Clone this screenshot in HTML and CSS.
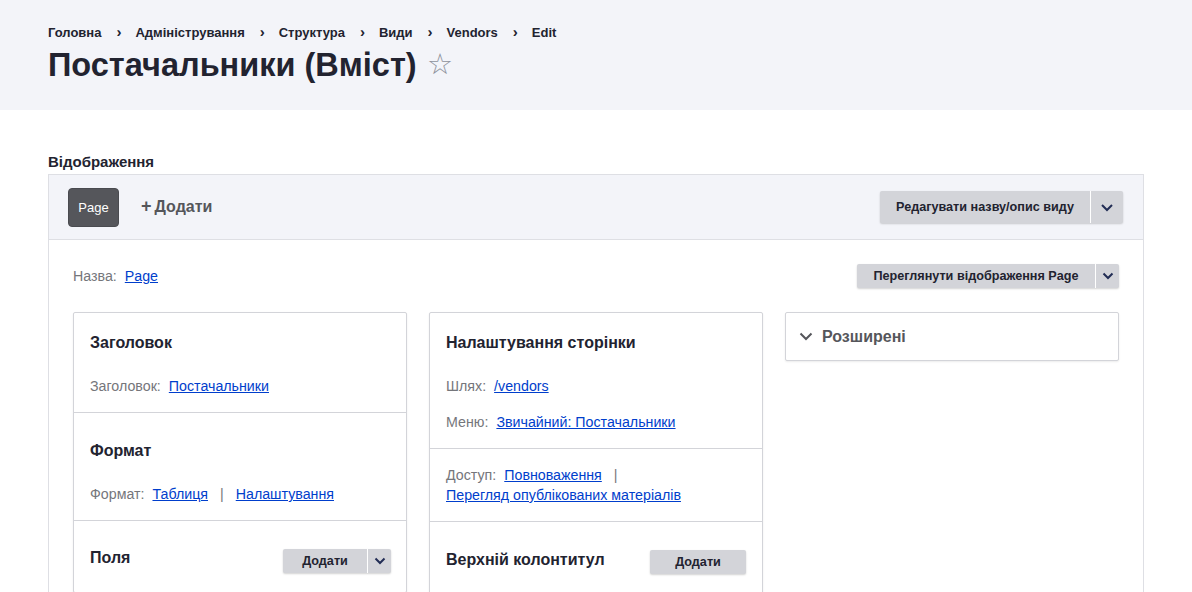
FILE: index.html
```html
<!DOCTYPE html>
<html lang="uk">
<head>
<meta charset="utf-8">
<title>Постачальники (Вміст)</title>
<link rel="stylesheet" href="styles.css">
</head>
<body>
<header class="page-head">
  <nav class="crumbs">
    <a href="#">Головна</a><span class="sep">›</span>
    <a href="#">Адміністрування</a><span class="sep">›</span>
    <a href="#">Структура</a><span class="sep">›</span>
    <a href="#">Види</a><span class="sep">›</span>
    <a href="#">Vendors</a><span class="sep">›</span>
    <a href="#">Edit</a>
  </nav>
  <div class="title-row">
    <h1 class="title">Постачальники (Вміст)</h1>
    <span class="star">☆</span>
  </div>
</header>

<main class="main">
  <h2 class="disp-label">Відображення</h2>
  <section class="display-box">
    <div class="tabbar">
      <div class="tabs">
        <a class="tab-active" href="#">Page</a>
        <a class="tab-add" href="#"><span class="plus">+</span>Додати</a>
      </div>
      <div class="split split-lg">
        <span class="split-main">Редагувати назву/опис виду</span>
        <span class="split-toggle"><svg width="14" height="9" viewBox="0 0 14 9"><path d="M2 2l5 5 5-5" fill="none" stroke="#222d55" stroke-width="2"/></svg></span>
      </div>
    </div>

    <div class="content">
      <div class="name-row">
        <div class="row"><span class="lbl">Назва:</span><a href="#">Page</a></div>
        <div class="split split-sm split-view">
          <span class="split-main">Переглянути відображення Page</span>
          <span class="split-toggle"><svg width="12" height="8" viewBox="0 0 12 8"><path d="M1.5 1.5l4.5 4.5 4.5-4.5" fill="none" stroke="#222d55" stroke-width="2"/></svg></span>
        </div>
      </div>

      <div class="columns">
        <div class="card">
          <div class="sec sec-first">
            <h3 class="sec-title">Заголовок</h3>
            <div class="row"><span class="lbl">Заголовок:</span><a href="#">Постачальники</a></div>
          </div>
          <div class="sec">
            <h3 class="sec-title">Формат</h3>
            <div class="row"><span class="lbl">Формат:</span><a href="#">Таблиця</a><span class="pipe">|</span><a href="#">Налаштування</a></div>
          </div>
          <div class="sec sec-head">
            <h3 class="sec-title">Поля</h3>
            <div class="split split-sm split-add">
              <span class="split-main">Додати</span>
              <span class="split-toggle"><svg width="12" height="8" viewBox="0 0 12 8"><path d="M1.5 1.5l4.5 4.5 4.5-4.5" fill="none" stroke="#222d55" stroke-width="2"/></svg></span>
            </div>
          </div>
        </div>

        <div class="card">
          <div class="sec sec-first">
            <h3 class="sec-title">Налаштування сторінки</h3>
            <div class="row"><span class="lbl">Шлях:</span><a href="#">/vendors</a></div>
            <div class="row row-gap"><span class="lbl">Меню:</span><a href="#">Звичайний: Постачальники</a></div>
          </div>
          <div class="sec sec-plain">
            <div class="row"><span class="lbl">Доступ:</span><a href="#">Повноваження</a><span class="pipe">|</span><br><a href="#">Перегляд опублікованих матеріалів</a></div>
          </div>
          <div class="sec sec-head sec-head2">
            <h3 class="sec-title">Верхній колонтитул</h3>
            <span class="btn-plain">Додати</span>
          </div>
        </div>

        <div class="col3">
          <div class="card adv">
            <svg class="adv-chev" width="14" height="9" viewBox="0 0 14 9"><path d="M1.5 1.5l5.5 5.5 5.5-5.5" fill="none" stroke="#55565b" stroke-width="2"/></svg>
            <span class="adv-title">Розширені</span>
          </div>
        </div>
      </div>
    </div>
  </section>
</main>
</body>
</html>
```

FILE: styles.css
```css
* { box-sizing: border-box; }
html, body { margin: 0; padding: 0; }
body {
  font-family: "Liberation Sans", Arial, sans-serif;
  color: #222330;
  background: #ffffff;
  width: 1192px;
  height: 592px;
  overflow: hidden;
}
a { color: #003ecc; }

.page-head {
  background: #f3f4f9;
  height: 110px;
  padding: 25px 48px 0;
}
.crumbs {
  display: flex;
  align-items: center;
  font-size: 13px;
  font-weight: bold;
  line-height: 16px;
  height: 16px;
}
.crumbs a { color: #222330; text-decoration: none; }
.crumbs .sep {
  font-size: 15px;
  font-weight: bold;
  margin: 0 14px 0 15px;
  position: relative;
  top: -1px;
}
.title-row {
  display: flex;
  align-items: center;
  margin-top: 4px;
  height: 40px;
}
.title {
  margin: 0;
  font-size: 32.5px;
  line-height: 40px;
  font-weight: bold;
}
.star {
  margin-left: 10px;
  font-size: 29px;
  color: #8e929c;
  line-height: 40px;
  position: relative;
  top: -1px;
}

.main { padding: 0 48px; }
.disp-label {
  margin: 43px 0 0;
  font-size: 15px;
  line-height: 18px;
  font-weight: bold;
  height: 21px;
}
.display-box {
  border: 1px solid #dedfe4;
  border-bottom: 0;
  height: 500px;
}
.tabbar {
  background: #f3f4f9;
  height: 65px;
  border-bottom: 1px solid #dedfe4;
  display: flex;
  align-items: center;
  justify-content: space-between;
  padding: 0 20px 0 19px;
}
.tabs { display: flex; align-items: center; }
.tab-active {
  display: flex;
  align-items: center;
  justify-content: center;
  width: 51px;
  height: 39px;
  background: #55565b;
  color: #ffffff;
  border-radius: 4px;
  font-size: 13px;
  text-decoration: none;
  border: 1px solid #4a4b50;
  margin-top: 1px;
}
.tab-add {
  margin-left: 22px;
  color: #55565b;
  font-size: 16px;
  font-weight: bold;
  text-decoration: none;
  display: flex;
  align-items: center;
}
.plus { font-size: 18px; margin-right: 3px; position: relative; top: -1px; }

.split {
  display: flex;
  background: #d3d4d9;
  border-radius: 2px;
  box-shadow: 0 1px 2px rgba(0,0,0,0.18);
  font-weight: bold;
  color: #222330;
}
.split-main { display: flex; align-items: center; justify-content: center; }
.split-toggle {
  display: flex;
  align-items: center;
  justify-content: center;
  border-left: 1px solid #ffffff;
}
.split-lg { height: 32px; font-size: 12.64px; }
.split-lg .split-main { width: 210px; }
.split-lg .split-toggle { width: 33px; }
.split-sm { height: 24px; font-size: 12.64px; }
.split-sm .split-toggle { width: 24px; }
.split-view .split-main { width: 238px; }

.content { padding: 24px 24px 0; }
.name-row {
  display: flex;
  justify-content: space-between;
  align-items: center;
  height: 24px;
}
.row {
  font-size: 14.22px;
  line-height: 20px;
  color: #545560;
}
.row .lbl { color: #75767b; margin-right: 8px; }
.pipe { color: #75767b; margin: 0 12px; }

.columns {
  display: grid;
  grid-template-columns: 1fr 1fr 1fr;
  column-gap: 22px;
  margin-top: 24px;
  align-items: start;
}
.card {
  border: 1px solid #d3d4d9;
  border-radius: 2px;
  box-shadow: 0 1px 2px rgba(0,0,0,0.08);
  background: #fff;
}
.sec {
  padding: 28px 16px 16px;
  border-top: 1px solid #d3d4d9;
}
.sec-first { border-top: 0; padding-top: 20px; }
.sec-plain { padding-top: 16px; }
.sec-title {
  margin: 0 0 23px;
  font-size: 16px;
  line-height: 20px;
  font-weight: bold;
  color: #222330;
}
.row-gap { margin-top: 16px; }
.sec-head {
  display: flex;
  justify-content: space-between;
  align-items: flex-start;
  padding-top: 27px;
  height: 72px;
}
.sec-head .sec-title { margin: 0; }
.split-add { margin-top: 1px; margin-right: -1px; }
.split-add .split-main { width: 84px; }
.sec-head2 { padding-top: 28px; }
.btn-plain {
  display: flex;
  align-items: center;
  justify-content: center;
  width: 96px;
  height: 24px;
  background: #d3d4d9;
  border-radius: 2px;
  box-shadow: 0 1px 2px rgba(0,0,0,0.18);
  font-size: 12.64px;
  font-weight: bold;
  color: #222330;
}

.adv {
  height: 49px;
  display: flex;
  align-items: center;
  padding-left: 13px;
}
.adv-chev { margin-right: 9px; }
.adv-title { font-size: 16px; font-weight: bold; color: #55565b; }
```
